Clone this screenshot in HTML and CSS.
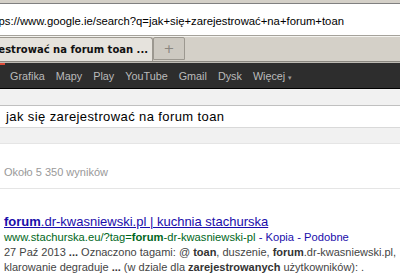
FILE: index.html
```html
<!DOCTYPE html>
<html lang="pl">
<head>
<meta charset="UTF-8">
<title>jak się zarejestrować na forum toan - Szukaj w Google</title>
<link rel="stylesheet" href="styles.css">
</head>
<body>
<div class="browser">
  <div class="top-edge"></div>
  <div class="urlbar">
    <span class="url">https://www.google.ie/search?q=jak+się+zarejestrować+na+forum+toan</span>
  </div>
  <div class="tabstrip">
    <div class="tab"><span class="tab-title">jak się zarejestrować na forum toan ...</span></div>
    <div class="newtab">+</div>
  </div>
</div>

<div class="gbar">
  <span class="gbar-current"></span>
  <a href="#">Grafika</a>
  <a href="#">Mapy</a>
  <a href="#">Play</a>
  <a href="#">YouTube</a>
  <a href="#">Gmail</a>
  <a href="#">Dysk</a>
  <a href="#">Więcej <span class="caret">▾</span></a>
</div>

<div class="header">
  <div class="searchbox">jak się zarejestrować na forum toan</div>
</div>

<div class="stats">Około 5 350 wyników</div>

<div class="results">
  <div class="result">
    <a class="title" href="#"><b>forum</b>.dr-kwasniewski.pl | kuchnia stachurska</a>
    <div class="cite">www.stachurska.eu/?tag=<b>forum</b>-dr-kwasniewski-pl <span class="links">- <a href="#">Kopia</a> - <a href="#">Podobne</a></span></div>
    <div class="snippet">27 Paź 2013 <b>...</b> Oznaczono tagami: @ <b>toan</b>, duszenie, <b>forum</b>.dr-kwasniewski.pl, klarowanie degraduje <b>...</b> (w dziale dla <b>zarejestrowanych</b> użytkowników): .</div>
  </div>
</div>
</body>
</html>
```

FILE: styles.css
```css
body {
  margin: 0;
  width: 400px;
  overflow: hidden;
  font-family: "Liberation Sans", Arial, sans-serif;
  background: #fff;
}

/* browser chrome */
.top-edge {
  height: 3px;
  background: #d4d0c8;
  border-bottom: 1px solid #808080;
}

.urlbar {
  height: 31px;
  background: #fff;
  border-bottom: 1px solid #a5a29b;
  white-space: nowrap;
  overflow: hidden;
}

.url {
  display: block;
  margin-left: -14px;
  padding-top: 4px;
  line-height: 27px;
  font-family: "Liberation Sans", Tahoma, sans-serif;
  font-size: 11.3px;
  color: #000;
}

.tabstrip {
  height: 24px;
  background: #d4d0c8;
  border-top: 1px solid #f4f3ef;
  border-bottom: 1px solid #8a8780;
  display: flex;
  align-items: flex-end;
  overflow: hidden;
}

.tab {
  width: 152px;
  height: 23px;
  margin-left: -1px;
  background: #e6e3dd;
  border: 1px solid #9c9890;
  border-bottom: none;
  border-radius: 0 3px 0 0;
  overflow: hidden;
  white-space: nowrap;
  direction: rtl;
}

.tab-title {
  direction: ltr;
  unicode-bidi: embed;
  display: inline-block;
  line-height: 23px;
  font-family: "DejaVu Sans", Tahoma, sans-serif;
  font-weight: bold;
  font-size: 10px;
  color: #111;
  padding-right: 4px;
}

.newtab {
  width: 30px;
  height: 21px;
  margin-bottom: 1px;
  background: #cdc9c1;
  border: 1px solid #9c9890;
  border-radius: 2px 2px 0 0;
  text-align: center;
  line-height: 21px;
  font-family: "DejaVu Sans", sans-serif;
  font-size: 13px;
  color: #8a8780;
}

/* google bar */
.gbar {
  height: 25px;
  background: #2d2d2d;
  border-top: 1px solid #bdbab3;
  border-bottom: 1px solid #000;
  display: flex;
  align-items: center;
  gap: 11px;
  font-size: 10.8px;
}

.gbar-current {
  align-self: flex-start;
  width: 5px;
  height: 2px;
  background: #dd4b39;
  margin-right: -6px;
}

.gbar a {
  color: #bbb;
  text-decoration: none;
}

.caret {
  font-size: 7px;
  color: #999;
}

/* search header */
.header {
  height: 55px;
  background: #f1f1f1;
  border-bottom: 1px solid #e5e5e5;
  padding-top: 16px;
  box-sizing: border-box;
}

.searchbox {
  height: 21px;
  background: #fff;
  border-top: 1px solid #c0c0c0;
  border-bottom: 1px solid #d9d9d9;
  padding-left: 6px;
  line-height: 21px;
  font-size: 13px;
  letter-spacing: 0.4px;
  color: #000;
}

.stats {
  height: 45px;
  border-bottom: 1px solid #e5e5e5;
  padding-left: 4px;
  line-height: 56px;
  font-size: 11px;
  color: #999;
  box-sizing: border-box;
}

/* results */
.results {
  padding: 25px 0 0 4px;
}

.title {
  display: block;
  font-size: 13px;
  line-height: 16px;
  color: #1a0dab;
  white-space: nowrap;
}

.cite {
  font-size: 11.2px;
  line-height: 15px;
  color: #006621;
  white-space: nowrap;
}

.cite .links,
.cite .links a {
  color: #1a0dab;
  text-decoration: none;
}

.snippet {
  font-size: 11px;
  line-height: 15px;
  color: #444;
}

.snippet b {
  color: #333;
}
```
